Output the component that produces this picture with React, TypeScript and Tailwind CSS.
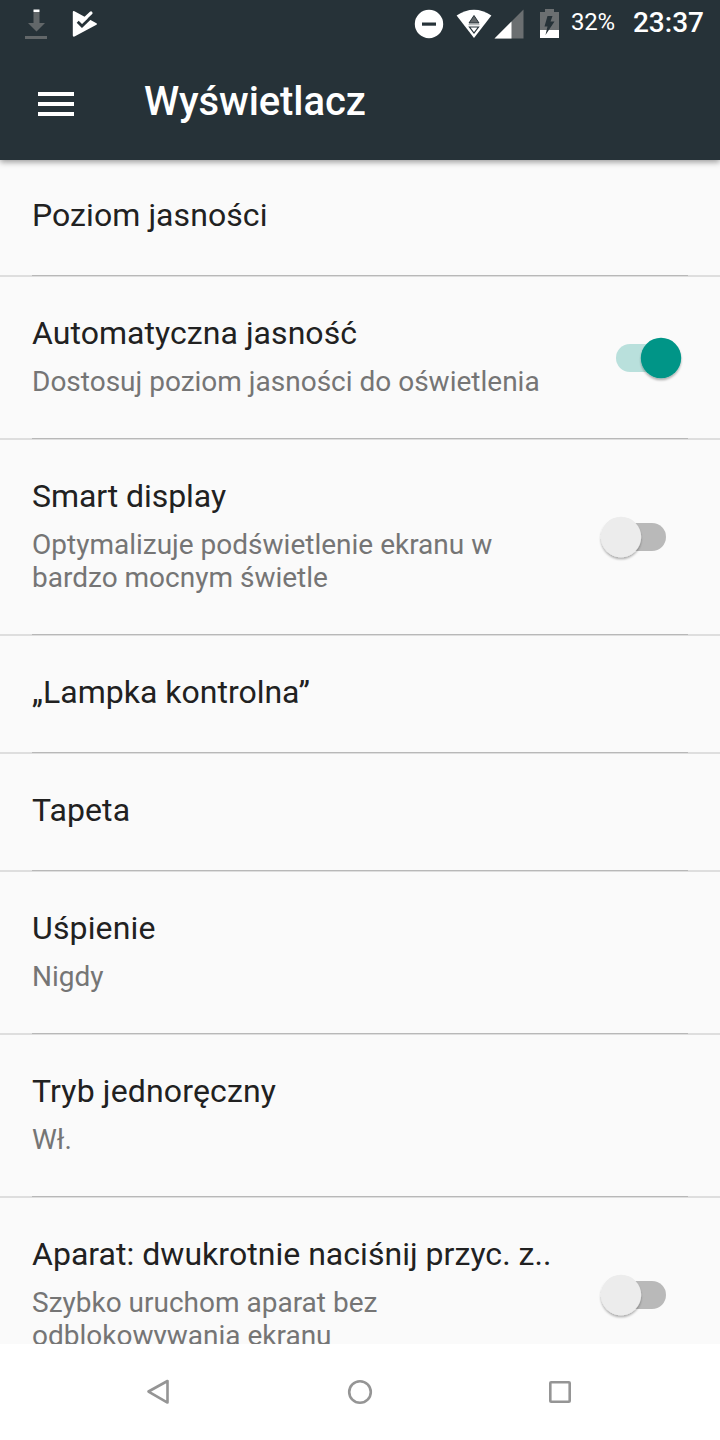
import React from "react";

function Divider() {
  return (
    <div className="h-[2px] bg-[#dedede]">
      <div className="mx-8 h-px bg-[#b8b8b8]" />
    </div>
  );
}

function Toggle({ on = false }: { on?: boolean }) {
  return (
    <svg
      className={on ? "mr-[31px] h-14 w-[81px] shrink-0" : "mr-[46px] h-14 w-[81px] shrink-0"}
      viewBox="0 0 81 56"
      role="switch"
      aria-checked={on}
    >
      <defs>
        <filter id="knob" x="-30%" y="-30%" width="160%" height="160%">
          <feDropShadow dx="0" dy="2" stdDeviation="1.3" floodOpacity="0.3" />
        </filter>
      </defs>
      <rect x={on ? 8 : 23} y="14" width="50" height="28" rx="14" fill={on ? "#b9e0dc" : "#b9b9b9"} />
      <circle cx={on ? 53 : 28} cy="28" r="20.2" fill={on ? "#009587" : "#ececec"} filter="url(#knob)" />
    </svg>
  );
}

interface ItemProps {
  title: string;
  lines?: string[];
  on?: boolean;
  tracking?: string;
}

function Item({ title, lines, on, tracking = "tracking-normal" }: ItemProps) {
  return (
    <>
      <div className="flex items-center justify-between">
        <div className={lines ? "shrink-0 pt-[37px] pb-10 pl-8" : "shrink-0 pt-[37px] pb-[41px] pl-8"}>
          <div className={`h-[38px] text-[32px] leading-[38px] whitespace-nowrap text-[#212121] ${tracking}`}>
            {title}
          </div>
          {lines && (
            <div className="pt-[13px] text-[28px] leading-[33px] whitespace-nowrap text-[#757575]">
              {lines.map((line) => (
                <div key={line}>{line}</div>
              ))}
            </div>
          )}
        </div>
        {on !== undefined && <Toggle on={on} />}
      </div>
      <Divider />
    </>
  );
}

function StatusBar() {
  return (
    <div className="flex h-12 text-white">
      <svg className="h-12 w-[120px]" viewBox="0 0 120 48" fill="none">
        <path d="M33.5 12h6v11H45l-8.5 8.5L28 23h5.5z" fill="#626769" />
        <path d="M33.5 9.5h6V12h-6z" fill="#fff" />
        <path d="M25 36h22v3H25z" fill="#626769" />
        <path d="M74.5 11.2 96 23q2 1 0 2L74.5 36.6q-1.7.6-1.7-1V12.2q0-1.8 1.7-1z" fill="#fff" />
        <path d="m83 20.5 8-7.5" stroke="#fff" strokeWidth="3.2" strokeLinecap="round" />
        <path d="m77.7 21.7 4.3 4.4 12-11.5" stroke="#263238" strokeWidth="2.8" />
      </svg>
      <div className="grow" />
      <svg className="h-12 w-[160px] shrink-0" viewBox="400 0 160 48" fill="none">
        <circle cx="429" cy="24" r="14.2" fill="#fff" />
        <path d="M422 22.5h14v3.2h-14z" fill="#263238" />
        <path d="M456.6 15.5Q474 3.8 491.4 15.5L474 38z" fill="#fff" />
        <path d="m474 15.5 5 7.5h-10z" fill="#626769" stroke="#263238" strokeWidth="1" />
        <path d="M468.5 24.5h11" stroke="#b9bdbe" strokeWidth="1.5" />
        <path d="M469.5 27h9l-4.5 6z" fill="#fff" stroke="#263238" strokeWidth="1.2" />
        <path d="M523.5 9.5v29h-29z" fill="#6b6f71" />
        <path d="M511.5 21.5v17h-17z" fill="#fff" />
        <path d="M545 9h9v3h5v26h-19V12h5z" fill="#6b6f71" />
        <path d="M540 30h19v8h-19z" fill="#fff" />
        <path d="M547.5 16h5L550.500 21.500h4L545.500 35l2-8.500h-3z" fill="#263238" />
      </svg>
      <div className="flex h-12 w-[160px] shrink-0 justify-between pr-4 pl-[11px]">
        <span className="pt-[8px] text-[24px] leading-7 tracking-[-0.3px]">32%</span>
        <span className="pt-[7px] text-[28px] leading-8 font-medium">23:37</span>
      </div>
    </div>
  );
}

export default function App() {
  return (
    <div className="flex h-[1440px] w-[720px] flex-col overflow-hidden bg-[#fafafa] font-['Roboto',sans-serif]">
      <header className="z-10 h-40 shrink-0 bg-[#263238] shadow-[0_2px_6px_rgba(0,0,0,0.4)]">
        <StatusBar />
        <div className="flex h-28 items-center text-white">
          <svg className="ml-[38px] h-6 w-9 shrink-0" viewBox="0 0 36 24" fill="#fff">
            <path d="M0 0h36v4H0zM0 10h36v4H0zM0 20h36v4H0z" />
          </svg>
          <h1 className="-mt-1 ml-[70px] text-[40px] leading-[48px] font-medium tracking-[-0.1px]">Wyświetlacz</h1>
        </div>
      </header>
      <main className="-mt-px h-[1185px] shrink-0 overflow-hidden">
        <Item title="Poziom jasności" tracking="tracking-[0.07px]" />
        <Item title="Automatyczna jasność" lines={["Dostosuj poziom jasności do oświetlenia"]} on tracking="tracking-[0.05px]" />
        <Item title="Smart display" lines={["Optymalizuje podświetlenie ekranu w", "bardzo mocnym świetle"]} on={false} tracking="tracking-[-0.07px]" />
        <Item title="„Lampka kontrolna”" />
        <Item title="Tapeta" tracking="tracking-[0.1px]" />
        <Item title="Uśpienie" lines={["Nigdy"]} tracking="tracking-[0.15px]" />
        <Item title="Tryb jednoręczny" lines={["Wł."]} tracking="tracking-[0.15px]" />
        <Item
          title="Aparat: dwukrotnie naciśnij przyc. z.."
          lines={["Szybko uruchom aparat bez", "odblokowywania ekranu"]}
          on={false}
          tracking="tracking-[0.03px]"
        />
      </main>
      <nav className="h-24 shrink-0 bg-white">
        <svg className="h-24 w-[720px]" viewBox="0 1344 720 96" fill="none" stroke="#959595" strokeWidth="2.6" strokeLinejoin="round">
          <path d="M148.5 1391.5 167.5 1381v21.5z" />
          <circle cx="360" cy="1392" r="10.8" />
          <rect x="550.3" y="1382.3" width="19.4" height="19.4" rx="0.8" />
        </svg>
      </nav>
    </div>
  );
}
